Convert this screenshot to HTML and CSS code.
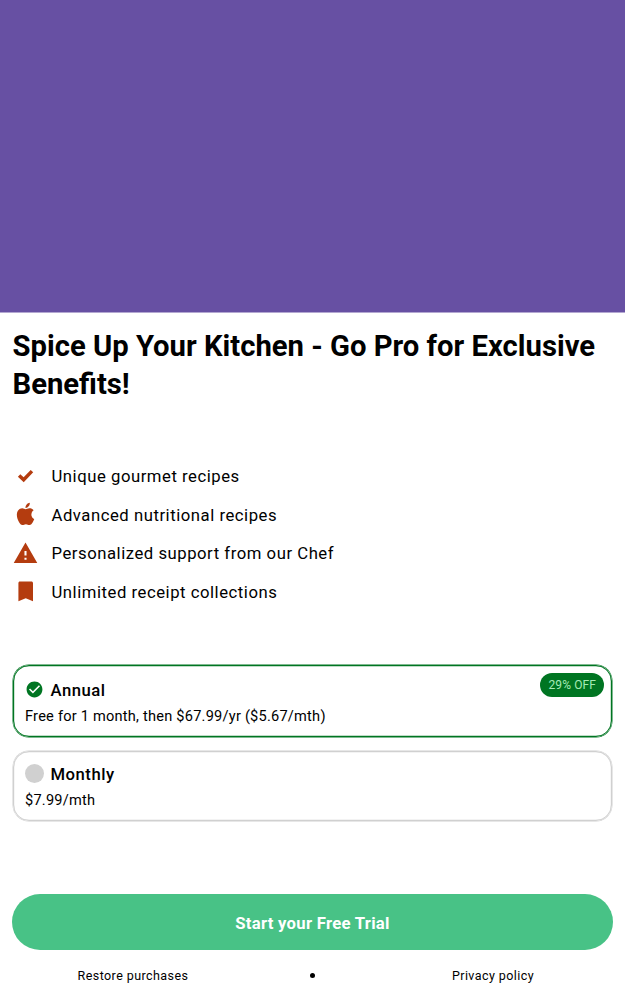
FILE: index.html
```html
<!DOCTYPE html>
<html lang="en">
<head>
<meta charset="utf-8">
<title>Go Pro</title>
<link rel="stylesheet" href="styles.css">
</head>
<body>
<main class="paywall">
  <div class="hero"></div>
  <h1 class="title">Spice Up Your Kitchen - Go Pro for Exclusive Benefits!</h1>
  <ul class="features">
    <li class="feature"><svg class="icon" viewBox="0 0 24 24"><path d="M10.300 17.400 4.700 12.300 7 9.900 10.200 12.700 17 5.700 19.400 8Z"/></svg><span>Unique gourmet recipes</span></li>
    <li class="feature"><svg class="icon" viewBox="0 0 24 24"><path transform="translate(-.3 -1.400) scale(1.030 1.070)" d="M18.710 19.500c-.83 1.240-1.710 2.450-3.050 2.470-1.340.03-1.770-.79-3.290-.79-1.530 0-2 .77-3.270.82-1.310.05-2.300-1.320-3.140-2.530C4.250 17 2.940 12.450 4.700 9.390c.87-1.520 2.430-2.480 4.120-2.510 1.280-.02 2.500.87 3.290.87.78 0 2.260-1.070 3.810-.91.65.03 2.470.26 3.640 1.980-.09.06-2.170 1.280-2.150 3.810.03 3.020 2.650 4.030 2.680 4.040-.03.07-.42 1.440-1.380 2.830M13 3.500c.73-.83 1.940-1.460 2.940-1.500.13 1.170-.34 2.350-1.040 3.190-.69.85-1.830 1.510-2.950 1.420-.15-1.150.41-2.350 1.050-3.110z"/></svg><span>Advanced nutritional recipes</span></li>
    <li class="feature"><svg class="icon" viewBox="0 0 24 24"><path d="M.7 21h22.600L12 1.500.7 21zM13 18h-2v-2h2v2zm0-4h-2v-4.500h2V14z"/></svg><span>Personalized support from our Chef</span></li>
    <li class="feature"><svg class="icon" viewBox="0 0 24 24"><path d="M17.700 2.500H6.600c-.8 0-1.400.6-1.400 1.400v17.500l7-3 7 3V3.900c0-.8-.7-1.400-1.500-1.400z"/></svg><span>Unlimited receipt collections</span></li>
  </ul>
  <section class="plans">
    <div class="plan plan-selected">
      <div class="plan-head"><svg class="radio" viewBox="0 0 24 24"><path d="M12 2C6.480 2 2 6.480 2 12s4.480 10 10 10 10-4.480 10-10S17.520 2 12 2zm-2 15-5-5 1.410-1.410L10 14.170l7.590-7.590L19 8l-9 9z"/></svg><h2 class="plan-name">Annual</h2></div>
      <p class="price">Free for 1 month, then $67.99/yr ($5.67/mth)</p>
      <span class="badge">29% OFF</span>
    </div>
    <div class="plan">
      <div class="plan-head"><span class="radio radio-off"></span><h2 class="plan-name">Monthly</h2></div>
      <p class="price">$7.99/mth</p>
    </div>
  </section>
  <button class="cta">Start your Free Trial</button>
  <footer class="footer"><a>Restore purchases</a><span class="dot"></span><a>Privacy policy</a></footer>
</main>
</body>
</html>
```
FILE: styles.css
```css
* { box-sizing: border-box; }
body { margin: 0; background: #fff; color: #000; font-family: Roboto, sans-serif; }
.paywall { height: 1000px; overflow: hidden; display: flex; flex-direction: column; }
.hero { height: 313px; flex: none; background: #6750a3; border-bottom: 1px solid #b3a7d1; }
.title { margin: 14px 12.5px 0; font-size: 29.240px; line-height: 38px; font-weight: 700; }
.features { list-style: none; margin: 61px 12.5px 0; padding: 0; display: flex; flex-direction: column; gap: 13.5px; }
.feature { display: flex; align-items: center; gap: 14px; height: 25px; font-size: 16.700px; letter-spacing: .53px; }
.icon { width: 25px; height: 25px; margin-top: -1px; fill: #b43c0f; }
.plans { margin: 60.500px 13px 0; display: flex; flex-direction: column; gap: 14px; }
.plan { --line: #d0d0d0; position: relative; height: 70px; padding: 10px 11px 0; border: 1px solid var(--line); border-radius: 16px; box-shadow: 0 0 0 .5px var(--line), inset 0 0 0 .2px var(--line); }
.plan-selected { --line: #007522; height: 72px; padding-top: 12px; }
.plan-head { display: flex; align-items: center; gap: 6.500px; height: 24px; }
.radio { width: 19px; height: 19px; margin-top: -1px; fill: #007522; }
.plan-selected .radio { margin-top: -2px; }
.radio-off { border-radius: 50%; background: #d0d0d0; }
.plan-name { margin: 0; font-size: 16.700px; font-weight: 500; letter-spacing: .5px; }
.price { margin: 4px 0 0; font-size: 14.600px; line-height: 20px; letter-spacing: .22px; }
.badge { position: absolute; top: 7px; right: 7px; height: 24px; padding: 0 8px 0 8.500px; border-radius: 12px; background: #007522; color: #a5eab5; font-size: 12px; line-height: 25px; letter-spacing: .1px; }
.cta { height: 56px; flex: none; margin: 73px 12px 0; padding-top: 3px; border: 0; border-radius: 28px; background: #48c286; color: #fff; font: 700 16.700px Roboto, sans-serif; letter-spacing: .27px; }
.footer { display: grid; grid-template-columns: 2fr 1fr 2fr; place-items: center; margin: 0 12px 0 13px; height: 50px; padding-top: 1px; font-size: 12.500px; letter-spacing: .43px; }
.dot { width: 5px; height: 5px; margin: -1px 1px 0 0; border-radius: 50%; background: #000; }
```
